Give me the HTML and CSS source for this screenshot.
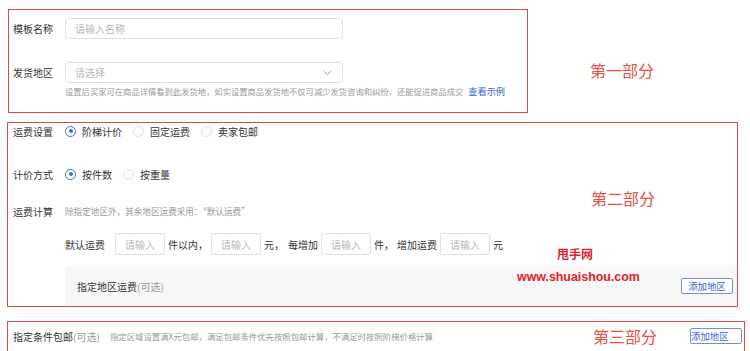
FILE: index.html
```html
<!DOCTYPE html>
<html lang="zh-CN">
<head>
  <meta charset="UTF-8" />
  <title>运费模板</title>
  <link rel="stylesheet" href="styles.css">
</head>
<body>
  <div class="part-one">
    <div class="box box-one">
      <div class="row">
        <span class="label">模板名称</span>
        <div class="input wide">请输入名称</div>
      </div>
      <div class="row row-select">
        <span class="label">发货地区</span>
        <div class="input wide select">
          请选择
          <svg class="chevron" width="9" height="6" viewBox="0 0 9 6"><path d="M1 1 L4.5 4.5 L8 1" fill="none" stroke="#999" stroke-width="1"/></svg>
        </div>
      </div>
      <div class="hint-line">设置后买家可在商品详情看到此发货地，如实设置商品发货地不仅可减少发货咨询和纠纷，还能促进商品成交<a class="link">查看示例</a></div>
    </div>
    <div class="tag tag-one">第一部分</div>
  </div>

  <div class="box box-two">
    <div class="row">
      <span class="label">运费设置</span>
      <span class="radio on"></span><span class="opt">阶梯计价</span>
      <span class="radio"></span><span class="opt">固定运费</span>
      <span class="radio"></span><span class="opt">卖家包邮</span>
    </div>
    <div class="row row-method">
      <span class="label">计价方式</span>
      <span class="radio on"></span><span class="opt">按件数</span>
      <span class="radio"></span><span class="opt">按重量</span>
    </div>
    <div class="row row-calc">
      <span class="label">运费计算</span>
      <span class="small-hint">除指定地区外，其余地区运费采用：“默认运费”</span>
    </div>
    <div class="fee-row">
      <span class="fee-label">默认运费</span>
      <div class="input tiny">请输入</div>
      <span>件以内，</span>
      <div class="input tiny">请输入</div>
      <span>元，</span>
      <span class="gap-left">每增加</span>
      <div class="input tiny">请输入</div>
      <span>件，</span>
      <span>增加运费</span>
      <div class="input tiny">请输入</div>
      <span>元</span>
    </div>
    <div class="area-panel">
      <span>指定地区运费<span class="muted">(可选)</span></span>
      <button class="btn">添加地区</button>
    </div>
    <div class="tag tag-two">第二部分</div>
    <div class="mark mark-name">甩手网</div>
    <div class="mark mark-url">www.shuaishou.com</div>
  </div>

  <div class="box box-three">
    <span class="cond">指定条件包邮<span class="muted">(可选)</span></span>
    <span class="small-hint cond-hint">指定区域设置满X元包邮，满足包邮条件优先按照包邮计算，不满足时按照阶梯价格计算</span>
    <div class="tag tag-three">第三部分</div>
    <button class="btn">添加地区</button>
  </div>
</body>
</html>
```

FILE: styles.css
```css
body {
  margin: 0;
  background: #fff;
  color: #333;
  font-family: "Noto Sans CJK SC", "Noto Sans", sans-serif;
  font-size: 10px;
}

.box {
  box-sizing: border-box;
  border: 1px solid #dc4c42;
}

.part-one {
  display: flex;
  align-items: flex-start;
  margin: 9px 0 0 8px;
}

.box-one {
  width: 520px;
  height: 104px;
  padding: 8px 0 0 4px;
}

.row {
  display: flex;
  align-items: center;
  height: 16px;
}

.label {
  width: 52px;
  flex-shrink: 0;
}

.input {
  box-sizing: border-box;
  border: 1px solid #dcdfe6;
  border-radius: 3px;
  color: #b8b8b8;
  display: flex;
  align-items: center;
  background: #fff;
}

.wide {
  width: 278px;
  height: 21px;
  padding-left: 9px;
}

.box-one .row {
  height: 21px;
}

.row-select {
  margin-top: 23px;
}

.select {
  justify-content: space-between;
  padding-right: 10px;
}

.hint-line {
  margin: 2px 0 0 52px;
  font-size: 8.3px;
  color: #999;
  line-height: 12px;
  white-space: nowrap;
}

.link {
  color: #3a64d0;
  margin-left: 5px;
  font-size: 9.2px;
}

.tag {
  color: #e8503f;
  font-size: 16px;
  line-height: 20px;
}

.tag-one {
  margin: 51px 0 0 62px;
}

.box-two {
  position: relative;
  width: 731px;
  height: 185px;
  margin: 9px 0 0 7px;
  padding-left: 5px;
}

.radio {
  box-sizing: border-box;
  width: 11px;
  height: 11px;
  border: 1px solid #dcdfe6;
  border-radius: 50%;
  margin-right: 6px;
  position: relative;
}

.radio.on {
  border-color: #3a6fd8;
}

.radio.on::after {
  content: "";
  position: absolute;
  left: 2.5px;
  top: 2.5px;
  width: 4px;
  height: 4px;
  border-radius: 50%;
  background: #3a6fd8;
}

.opt {
  margin-right: 11px;
}

.row-method {
  margin-top: 27px;
}

.row-calc {
  margin-top: 21px;
}

.small-hint {
  font-size: 8.6px;
  color: #999;
}

.fee-row {
  display: flex;
  align-items: center;
  gap: 3px;
  margin: 14px 0 0 52px;
  height: 22px;
}

.fee-label {
  margin-right: 7px;
}

.tiny {
  width: 50px;
  height: 22px;
  padding-left: 9px;
}

.gap-left {
  margin-left: 1px;
}

.area-panel {
  display: flex;
  align-items: center;
  justify-content: space-between;
  margin: 11px 0 0 52px;
  height: 40px;
  padding: 0 4px 0 12px;
  background: #f7f7f7;
}

.muted {
  color: #999;
}

.btn {
  font-family: inherit;
  font-size: 9.4px;
  color: #3a64d0;
  background: #fff;
  border: 1px solid #6f8fd8;
  border-radius: 2px;
  width: 52px;
  height: 16px;
  padding: 0;
  line-height: 14px;
  flex-shrink: 0;
}

.tag-two {
  position: absolute;
  left: 583px;
  top: 65px;
}

.mark {
  position: absolute;
  color: #e0222c;
  font-weight: bold;
}

.mark-name {
  left: 549px;
  top: 123px;
  font-size: 12px;
  line-height: 16px;
}

.mark-url {
  left: 509px;
  top: 146px;
  font-family: "Liberation Sans", Arial, sans-serif;
  font-size: 12.4px;
  line-height: 16px;
}

.box-three {
  display: flex;
  align-items: flex-start;
  width: 738px;
  height: 44px;
  margin: 14px 0 0 7px;
  padding: 6px 2px 0 5px;
}

.box-three > * {
  height: 16px;
  display: flex;
  align-items: center;
  flex-shrink: 0;
}

.cond {
  width: 87px;
}

.cond-hint {
  margin-left: 10px;
  font-size: 8.4px;
}

.tag-three {
  margin-left: auto;
  margin-right: 33px;
}
```
